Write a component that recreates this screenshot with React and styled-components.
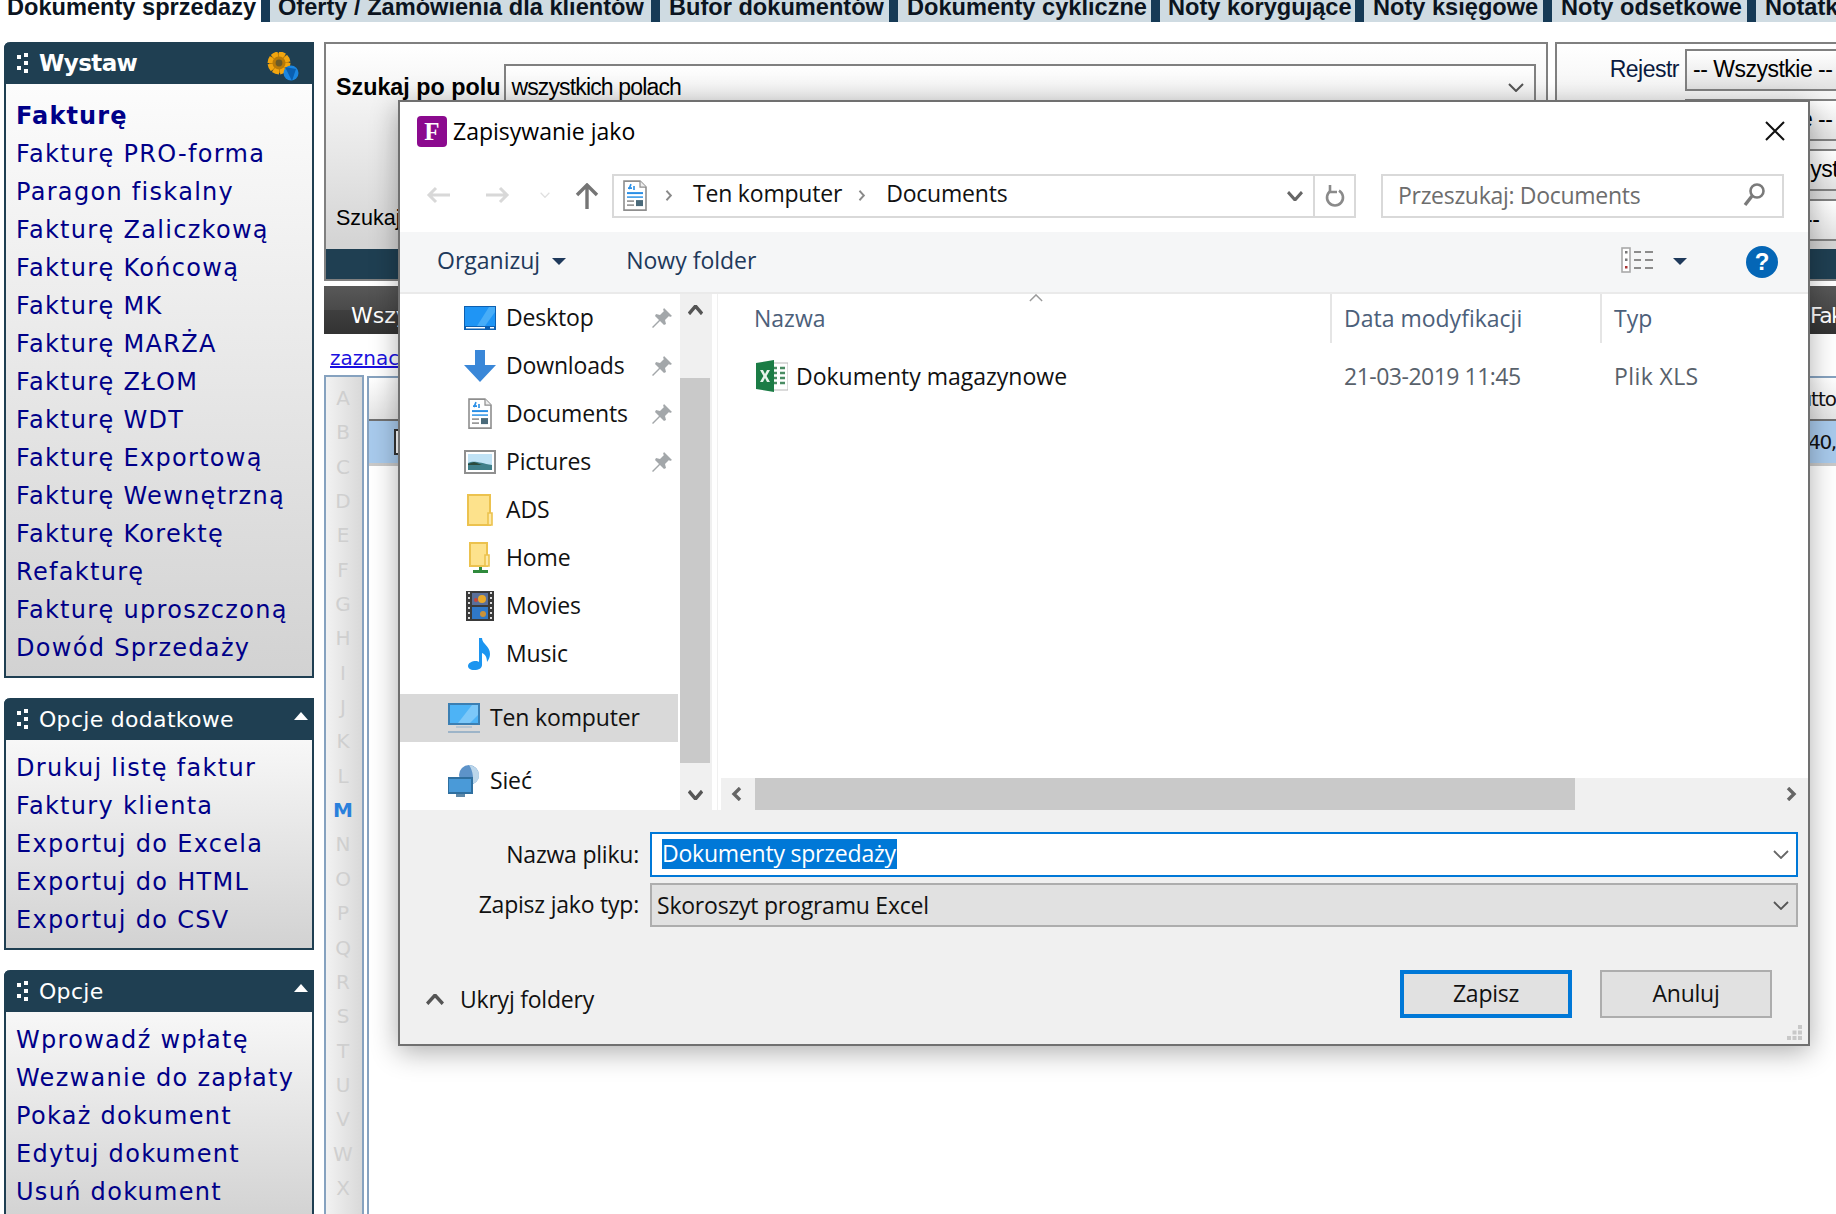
import React from "react";
import styled, { createGlobalStyle } from "styled-components";

const Global = createGlobalStyle`
  html, body { margin: 0; padding: 0; background: #fff; }
  * { box-sizing: border-box; }
  #root { width: 1836px; height: 1214px; overflow: hidden; position: relative; }
`;
const UI = `"Open Sans", "Noto Sans", sans-serif`;
const WEB = `"Liberation Sans", Arial, sans-serif`;
const VERD = `"DejaVu Sans", Verdana, sans-serif`;
const NAVY = "#1f3f52";

const Page = styled.div`
  width: 1836px; height: 1214px; position: relative; overflow: hidden; background: #fff; font-family: ${WEB};
`;
const TabBar = styled.div`
  display: flex; height: 22px; overflow: hidden; background: #cfdbe2;
`;
const Tab = styled.div`
  flex: ${(p) => (p.$last ? 1 : "none")}; width: ${(p) => (p.$w ? `${p.$w}px` : "auto")}; height: 22px; padding-left: ${(p) => p.$pl}px; line-height: 14px;
  font-size: 23.6px; font-weight: bold; color: #0b1420; white-space: nowrap; overflow: hidden;
  background: ${(p) => (p.$active ? "#fff" : "#cfdbe2")};
  border-right: ${(p) => (p.$last ? 0 : "9px")} solid #163a56;
`;
const Body = styled.div`
  display: grid; grid-template-columns: 310px 1fr; column-gap: 10px; padding: 20px 0 0 4px;
`;
const Sidebar = styled.div`
  display: flex; flex-direction: column; gap: 20px;
`;
const Panel = styled.section`
  width: 310px; border: 2px solid ${NAVY}; border-top: 0; border-radius: 6px 6px 0 0;
  background: linear-gradient(#fff, #d2d2d2);
`;
const PanelHead = styled.div`
  height: 42px; margin: 0 -2px; padding: 0 6px 0 12px; background: ${NAVY}; border-radius: 6px 0 0 0;
  display: flex; align-items: center; gap: 9px; color: #fff; font-family: ${VERD};
  font-size: ${(p) => (p.$bold ? 23 : 22)}px; font-weight: ${(p) => (p.$bold ? "bold" : "normal")};
  letter-spacing: ${(p) => (p.$bold ? -0.6 : 0.3)}px; position: relative;
`;
const HeadEnd = styled.span`
  margin-left: auto; display: flex; align-self: flex-start; margin-top: ${(p) => p.$mt}px; margin-right: ${(p) => p.$mr}px;
`;
const Caret = styled.span`
  width: 0; height: 0; border-left: 7px solid transparent; border-right: 7px solid transparent;
  border-bottom: 8px solid #fff;
`;
const MenuList = styled.div`
  padding: ${(p) => p.$pt}px 0 9px 10px;
`;
const MenuLink = styled.div`
  height: 38px; line-height: 38px; font-family: ${VERD}; font-size: 24px; color: #000088; white-space: nowrap;
  font-weight: ${(p) => (p.$bold ? "bold" : "normal")};
  letter-spacing: ${(p) => (p.$bold ? 1.1 : 1.3)}px;
`;
const Main = styled.div`
  display: flex; flex-direction: column; min-width: 0;
`;
const TopRow = styled.div`
  display: flex; gap: 7px; height: 239px;
`;
const Box = styled.div`
  flex: none; width: ${(p) => p.$w}px; border: 2px solid #808080; display: flex; flex-direction: column;
  background: linear-gradient(#fff, #d4d4d4 85%);
  ${(p) => p.$open && "border-right: 0;"}
`;
const BoxContent = styled.div`
  flex: 1; padding: ${(p) => p.$pad}; min-height: 0; overflow: hidden;
`;
const DarkBar = styled.div`
  height: 30px; background: ${NAVY}; flex: none;
`;
const SearchRow = styled.div`
  display: flex; align-items: flex-start; gap: 4px; height: 42px; color: #000;
`;
const SearchLabel = styled.span`
  font-weight: ${(p) => (p.$bold ? "bold" : "normal")}; font-size: ${(p) => (p.$bold ? 23.3 : 21.5)}px; line-height: 42px; white-space: nowrap;
  ${(p) => p.$bold && "margin-top: 2px;"}
`;
const SearchSelect = styled.div`
  width: 1032px; height: 44px; border: 2px solid #808080; background: linear-gradient(#fff, #ececec);
  display: flex; align-items: center; justify-content: space-between; padding: 2px 10px 0 5px;
  font-size: 23px; letter-spacing: -0.85px;
`;
const SecondSearch = styled(SearchRow)`
  margin-top: 91px;
`;
const FilterRow = styled.div`
  height: 50px; display: flex; align-items: flex-start; font-size: 23px; color: #000; letter-spacing: -0.5px;
`;
const FilterLabel = styled.span`
  width: 128px; text-align: right; padding-right: 6px; line-height: 40px; white-space: nowrap; color: #0a1a40;
`;
const FilterSelect = styled.span`
  flex: 1; height: 42px; border: 2px solid #808080; border-right: 0;
  background: linear-gradient(#fff, #e2e2e2); padding-left: ${(p) => p.$indent}px; line-height: 36px; white-space: nowrap; overflow: hidden;
`;
const DarkTabs = styled.div`
  margin-top: 5px; height: 48px; display: flex; justify-content: space-between; align-items: flex-end;
  padding: 0 0 2px 27px; color: #fff; font-family: ${VERD}; font-size: 22px; line-height: 32px;
  background: linear-gradient(#585858, #4a4a4a 50%, #3f3f3f 50%, #333);
`;
const DarkTabEnd = styled.span`
  width: 26px; overflow: hidden; white-space: nowrap; letter-spacing: -1.5px;
`;
const SelectAll = styled.a`
  display: block; margin: 12px 0 0 6px; height: 29px; font-family: ${VERD}; font-size: 20px; line-height: 24px; color: #1a10e0; text-decoration: underline;
`;
const TableArea = styled.div`
  display: flex; gap: 3px; height: 840px;
`;
const Alpha = styled.div`
  width: 40px; flex: none; border: 2px solid #86a2bf; border-bottom: 0; padding-top: 4px;
  background: linear-gradient(90deg, #f2f2f2, #d9d9d9);
  display: flex; flex-direction: column; align-items: center;
`;
const AlphaLetter = styled.span`
  height: 34.35px; line-height: 34px; font-family: ${VERD}; font-size: 20px; padding-right: 2px;
  color: ${(p) => (p.$on ? "#2a80dc" : "#cfcfcf")}; font-weight: ${(p) => (p.$on ? "bold" : "normal")};
`;
const Table = styled.div`
  flex: 1; border-left: 2px solid #86a2bf; border-top: 2px solid #86a2bf; margin-top: 1px; min-width: 0;
`;
const THead = styled.div`
  height: 43px; background: linear-gradient(#fff, #e4e4e4); border-bottom: 2px solid #707070; font-family: ${VERD}; font-size: 20px;
  display: flex; justify-content: flex-end; align-items: center; color: #111; white-space: nowrap; overflow: hidden; letter-spacing: -1px;
`;
const TRow = styled.div`
  height: 45px; background: #a8caec; border-bottom: 3px solid #c9c9c9; display: flex; align-items: center; justify-content: space-between;
  font-family: ${VERD}; font-size: 20px; color: #111; white-space: nowrap; overflow: hidden; padding-left: 25px; letter-spacing: -1.5px;
`;
const RowCheck = styled.span`
  width: 24px; height: 26px; border: 2px solid #333; background: #fff; flex: none;
`;
const Clip = styled.span`
  margin-right: ${(p) => p.$mr}px;
`;

/* dialog */
const Dialog = styled.div`
  position: absolute; left: 398px; top: 100px; width: 1412px; height: 946px; border: 2px solid #707070;
  background: #fff; box-shadow: 0 6px 26px rgba(0,0,0,.32); font-family: ${UI}; font-size: 23px; color: #000;
  display: flex; flex-direction: column;
`;
const TitleBar = styled.div`
  height: 62px; flex: none; display: flex; align-items: center; padding: 0 22px 4px 17px; gap: 6px;
`;
const AppBadge = styled.span`
  width: 30px; height: 31px; border-radius: 4px; background: #8b0a8e; color: #fff; display: flex; align-items: center; justify-content: center;
  font-family: "Liberation Serif", serif; font-weight: bold; font-size: 25px; line-height: 1;
`;
const CloseBtn = styled.span`
  margin-left: auto; display: flex;
`;
const NavBar = styled.div`
  height: 68px; flex: none; display: flex; align-items: flex-start; padding: 10px 25px 0 26px;
`;
const NavGlyph = styled.span`
  display: flex; flex: none; margin: ${(p) => p.$m ?? "0"};
`;
const AddressBox = styled.div`
  width: 744px; height: 44px; margin-left: 13px; flex: none; border: 2px solid #d9d9d9; display: flex; align-items: center; padding-left: 9px; color: #111;
`;
const Crumb = styled.span`
  margin: 0 16px 6px 20px; white-space: nowrap; letter-spacing: -0.2px;
`;
const AddressEnd = styled.span`
  margin-left: auto; display: flex; align-items: center; height: 100%;
`;
const RefreshCell = styled.span`
  width: 41px; height: 100%; border-left: 2px solid #d9d9d9; margin-left: 10px; display: flex; align-items: center; justify-content: center;
`;
const SearchField = styled.div`
  width: 403px; height: 44px; margin-left: 25px; border: 2px solid #d9d9d9; display: flex; align-items: center; justify-content: space-between;
  padding: 0 16px 2px 15px; color: #6d6d6d; flex: none; white-space: nowrap; letter-spacing: -0.3px;
`;
const Toolbar = styled.div`
  height: 62px; flex: none; background: #f5f6f7; border-bottom: 2px solid #eaeaea; display: flex; align-items: center; padding: 0 30px 4px 37px; color: #1e395b;
`;
const ToolItem = styled.span`
  display: flex; align-items: center; white-space: nowrap; margin: ${(p) => p.$m ?? "0"};
`;
const DownCaret = styled.span`
  width: 0; height: 0; border-left: 7px solid transparent; border-right: 7px solid transparent; border-top: 7px solid #1e395b; margin-top: 3px;
  margin-left: ${(p) => p.$ml}px;
`;
const HelpDot = styled.span`
  width: 32px; height: 32px; border-radius: 50%; background: #0466b6; color: #fff; display: flex; align-items: center; justify-content: center;
  font-family: ${WEB}; font-weight: bold; font-size: 24px; margin: 2px 0 -2px 59px;
`;
const Content = styled.div`
  flex: 1; display: flex; min-height: 0;
`;
const NavPane = styled.div`
  width: 280px; flex: none; display: flex; flex-direction: column; overflow: hidden;
`;
const NavRow = styled.div`
  height: 48px; flex: none; display: flex; align-items: center; gap: 10px; padding: 0 5px 2px ${(p) => p.$pl}px; color: #111; letter-spacing: -0.15px;
  margin-top: ${(p) => p.$mt ?? 0}px; background: ${(p) => (p.$sel ? "#d9d9d9" : "transparent")}; width: 278px; white-space: nowrap;
`;
const NavIcon = styled.span`
  width: 32px; height: 32px; display: flex; align-items: center; justify-content: center; flex: none; margin-top: 2px;
`;
const PinWrap = styled.span`
  margin-left: auto; display: flex; margin-top: 2px;
`;
const VScroll = styled.div`
  width: 32px; flex: none; background: #f0f0f0; display: flex; flex-direction: column; align-items: flex-start;
`;
const ScrollBtn = styled.span`
  width: 30px; height: 84px; flex: none; display: flex; align-items: ${(p) => (p.$end ? "flex-end" : "flex-start")}; justify-content: center;
  padding: ${(p) => (p.$end ? "0 0 10px" : "11px 0 0")};
`;
const VThumb = styled.span`
  width: 30px; height: 385px; background: #c9c9c9; flex: none;
`;
const VScrollEnd = styled(ScrollBtn)`
  height: 47px;
`;
const ListPane = styled.div`
  flex: 1; margin-left: 5px; border-left: 1px solid #f0f0f0; display: flex; flex-direction: column; position: relative; min-width: 0;
`;
const Grid = styled.div`
  display: grid; grid-template-columns: 612px 270px 1fr;
`;
const HeadRow = styled(Grid)`
  height: 49px; color: #4c607a;
`;
const HeadCell = styled.div`
  padding: 2px 0 0 ${(p) => p.$pl ?? 12}px; line-height: 45px; ${(p) => !p.$first && "border-left: 2px solid #e5e5e5;"}
  position: relative; white-space: nowrap;
`;
const SortMark = styled.span`
  position: absolute; left: 311px; top: 0; display: flex;
`;
const FileRow = styled(Grid)`
  margin-top: 10px; height: 45px; align-items: center; color: #58616b;
`;
const FileName = styled.div`
  display: flex; align-items: center; gap: 8px; padding-left: 38px; color: #111; white-space: nowrap;
`;
const FileCell = styled.div`
  padding-left: 14px; white-space: nowrap; letter-spacing: ${(p) => p.$ls}px;
`;
const HScroll = styled.div`
  margin: auto 0 0 3px; height: 32px; background: #f0f0f0; display: flex; align-items: stretch;
`;
const HBtn = styled.span`
  width: ${(p) => p.$w}px; flex: ${(p) => (p.$grow ? 1 : "none")}; display: flex; align-items: center; justify-content: ${(p) => (p.$grow ? "flex-end" : "flex-start")};
  padding: 0 ${(p) => (p.$grow ? 11 : 0)}px 0 ${(p) => (p.$grow ? 0 : 10)}px;
`;
const HThumb = styled.span`
  width: 820px; background: #c9c9c9; flex: none;
`;
const Bottom = styled.div`
  height: 234px; flex: none; background: #f0f0f0; padding: 22px 10px 0 0; position: relative; display: flex; flex-direction: column; letter-spacing: -0.22px;
`;
const FormRow = styled.div`
  display: grid; grid-template-columns: 239px 1148px; column-gap: 11px; align-items: center; margin-bottom: ${(p) => p.$mb ?? 0}px;
`;
const FormLabel = styled.label`
  text-align: right; white-space: nowrap; color: #111; padding-bottom: 2px;
`;
const Field = styled.div`
  height: ${(p) => p.$h}px; display: flex; align-items: center; justify-content: space-between; white-space: nowrap; color: #111;
  border: 2px solid ${(p) => (p.$focus ? "#0078d7" : "#adadad")}; background: ${(p) => (p.$focus ? "#fff" : "#e1e1e1")};
  padding: 0 7px 0 ${(p) => (p.$focus ? 10 : 5)}px;
`;
const Selected = styled.span`
  background: #0078d7; color: #fff; height: 30px; line-height: 28px; padding-right: 1px; margin-top: -1px;
`;
const Footer = styled.div`
  display: flex; align-items: center; margin-top: 43px; padding: 0 26px;
`;
const Toggle = styled.span`
  display: flex; align-items: center; gap: 16px; color: #111; margin: 10px auto 0 0; white-space: nowrap;
`;
const Btn = styled.span`
  width: 172px; height: 48px; display: flex; align-items: center; justify-content: center; background: #e1e1e1; color: #111; flex: none;
  border: ${(p) => (p.$primary ? "4px solid #0078d7" : "2px solid #adadad")}; margin-left: ${(p) => p.$ml ?? 0}px; padding-bottom: 2px;
`;
const Grip = styled.span`
  position: absolute; right: 5px; bottom: 3px; display: flex;
`;

const Chevron = ({ w = 16, h = 9, c = "#666", s = 2, up }) => (
  <svg width={w} height={h} viewBox="0 0 16 9" preserveAspectRatio="none">
    <polyline points={up ? "1,8 8,1 15,8" : "1,1 8,8 15,1"} fill="none" stroke={c} strokeWidth={s} />
  </svg>
);
const Side = ({ left, c = "#666", s = 3.4, w = 11, h = 14 }) => (
  <svg width={w} height={h} viewBox="0 0 11 14" preserveAspectRatio="none">
    <polyline points={left ? "9,1 3,7 9,13" : "2,1 8,7 2,13"} fill="none" stroke={c} strokeWidth={s} />
  </svg>
);
const Arrow = ({ dir }) => (
  <svg width="24" height="18" viewBox="0 0 24 18" fill="none" stroke="#d8d8d8" strokeWidth="3">
    {dir === "l" ? <path d="M24 9H3M10 2 3 9l7 7" /> : <path d="M0 9h21M14 2l7 7-7 7" />}
  </svg>
);
const UpArrow = () => (
  <svg width="24" height="26" viewBox="0 0 24 26" fill="none" stroke="#757575" strokeWidth="3.4">
    <path d="M12 26V3M2 12l10-10 10 10" />
  </svg>
);
const CloseX = () => (
  <svg width="22" height="22" viewBox="0 0 22 22" stroke="#111" strokeWidth="2"><path d="M2 2l18 18M20 2 2 20" /></svg>
);
const Refresh = () => (
  <svg width="20" height="24" viewBox="0 0 20 24" fill="none" stroke="#8a8a8a" strokeWidth="2.6">
    <path d="M6 6.6A8 8 0 1 0 14 6.6" /><path d="M5 1v7h7" />
  </svg>
);
const Magnifier = () => (
  <svg width="24" height="26" viewBox="0 0 24 26" fill="none" stroke="#7a7a7a" strokeWidth="2.6">
    <circle cx="15" cy="9" r="6.5" /><path d="M10 14 3 23" strokeWidth="3.4" />
  </svg>
);
const ViewIcon = () => (
  <svg width="32" height="26" viewBox="0 0 32 26">
    <rect x="1" y="1" width="8" height="24" fill="#fff" stroke="#a9a9a9" strokeWidth="1.6" />
    <rect x="4" y="4" width="2.5" height="2.5" fill="#777" /><rect x="4" y="11.5" width="2.5" height="2.5" fill="#777" /><rect x="4" y="19" width="2.5" height="2.5" fill="#a33" />
    <path d="M13 5h7M24 5h8M13 13h7M24 13h8M13 21h7M24 21h8" stroke="#8c8c8c" strokeWidth="2" />
  </svg>
);
const Pin = () => (
  <svg width="22" height="22" viewBox="0 0 22 22">
    <path d="M13 1l8 8-2 1-1-1-4 4 1 4-2 1-4-4-7 7-1-1 7-7-4-4 1-2 4 1 4-4-1-1z" fill="#a3a7aa" />
  </svg>
);
const DocIcon = ({ size = 24 }) => (
  <svg width={size} height={size * 1.3} viewBox="0 0 24 31">
    <path d="M1 1h16l6 6v23H1z" fill="#fff" stroke="#8e8e8e" strokeWidth="1.6" />
    <path d="M17 1v6h6" fill="#eee" stroke="#8e8e8e" strokeWidth="1.2" />
    <path d="M5 8h4M11 6v4M8 4 6 9" stroke="#2a8fe6" strokeWidth="1.6" />
    <path d="M4 13h16" stroke="#2a8fe6" strokeWidth="2" /><path d="M4 17h16" stroke="#3a9ae8" strokeWidth="1.6" />
    <path d="M4 21h7M4 25h7" stroke="#9a9a9a" strokeWidth="1.6" /><rect x="13" y="20" width="7" height="6" fill="#4a6a7a" />
  </svg>
);
const Icons = {
  desktop: (
    <svg width="32" height="24" viewBox="0 0 32 24"><rect width="32" height="24" fill="#0d5fb0" /><rect x="1" y="1" width="30" height="19" fill="#1f95f5" /><path d="M13 20 25 1h6v5L21 20z" fill="#47adf8" /><rect x="2" y="21" width="19" height="1.5" fill="#fff" /><rect x="26" y="21" width="4" height="1.5" fill="#fff" /></svg>
  ),
  downloads: (
    <svg width="32" height="32" viewBox="0 0 32 32"><path d="M11 0h10v15h11L16 32 0 15h11z" fill="#3a87d8" /></svg>
  ),
  documents: <DocIcon />,
  pictures: (
    <svg width="32" height="24" viewBox="0 0 32 24"><rect x="1" y="1" width="30" height="22" fill="#fff" stroke="#8f8f8f" strokeWidth="2" /><rect x="4" y="4" width="24" height="16" fill="#bfe2f5" /><path d="M4 13c6-3 12 0 24 2v5H4z" fill="#3f7f8a" /><path d="M4 14l6-2 8 3H4z" fill="#2b4a3c" /></svg>
  ),
  folder: (
    <svg width="26" height="32" viewBox="0 0 26 32"><path d="M1 1h22v30H1z" fill="#fde28c" stroke="#ecc24e" strokeWidth="2" /><path d="M21 19h4v12h-4z" fill="#fde9a8" stroke="#ecc24e" strokeWidth="1.6" /></svg>
  ),
  home: (
    <svg width="22" height="32" viewBox="0 0 22 32"><path d="M1 1h17v23H1z" fill="#fde28c" stroke="#ecc24e" strokeWidth="2" /><path d="M16 13h4v11h-4z" fill="#fde9a8" stroke="#ecc24e" strokeWidth="1.6" /><path d="M10 25h3v3h6v3H4v-3h6z" fill="#2f8a3c" /></svg>
  ),
  movies: (
    <svg width="28" height="30" viewBox="0 0 28 30"><rect width="28" height="30" fill="#3a3a3a" /><path d="M2 2h2M2 7h2M2 12h2M2 17h2M2 22h2M2 27h2M24 2h2M24 7h2M24 12h2M24 17h2M24 22h2M24 27h2" stroke="#ddd" strokeWidth="2" /><rect x="6" y="2" width="16" height="12" fill="#5a6f9a" /><circle cx="16" cy="8" r="4" fill="#e8a92b" /><circle cx="10" cy="9" r="2" fill="#c4463a" /><rect x="6" y="16" width="16" height="12" fill="#2f78c8" /><circle cx="17" cy="23" r="3" fill="#c9923a" /></svg>
  ),
  music: (
    <svg width="24" height="32" viewBox="0 0 24 32"><path d="M11 0h3c0 6 8 8 8 16 0 3-1 5-3 8 0-5-2-8-5-9v12c0 3-3 5-8 5-4 0-6-2-6-4 0-3 4-5 8-5 1 0 2 0 3 1z" fill="#1c95f0" /></svg>
  ),
  computer: (
    <svg width="32" height="30" viewBox="0 0 32 30"><rect x="1" y="1" width="30" height="20" fill="#4db3f6" stroke="#3b7fb3" strokeWidth="2" /><path d="M10 20 24 2h6v10l-8 8z" fill="#7cc8f9" /><rect x="8" y="23" width="16" height="2" fill="#b8c6d2" /><rect y="28" width="32" height="2" fill="#9db4c8" /></svg>
  ),
  network: (
    <svg width="32" height="32" viewBox="0 0 32 32"><circle cx="21" cy="10" r="10" fill="#5d93c9" /><path d="M21 0c6 1 10 5 10 10s-3 8-7 9c2-5 1-13-3-19z" fill="#bcd6ea" /><rect x="0" y="13" width="24" height="15" fill="#4a9ad8" stroke="#2f6f9f" strokeWidth="2" /><rect x="8" y="29" width="9" height="3" fill="#5e88a8" /></svg>
  ),
  excel: (
    <svg width="32" height="32" viewBox="0 0 32 32"><rect x="12" y="3" width="20" height="27" fill="#fff" stroke="#b8b8b8" /><path d="M16 8h5M24 8h5M16 13h5M24 13h5M16 18h5M24 18h5M16 23h5M24 23h5" stroke="#4a8c63" strokeWidth="2.4" /><path d="M0 3 18 0v32L0 29z" fill="#1b7c45" /><path d="M4 10h3l2 4 2-4h3l-3.4 6L14 22h-3l-2-4-2 4H4l3.4-6z" fill="#e6f3ea" /></svg>
  ),
};
const Grab = () => (
  <svg width="14" height="20" viewBox="0 0 14 20" fill="#fff"><rect x="1" y="2" width="4" height="4" /><rect x="8" y="0" width="4" height="4" /><rect x="8" y="8" width="4" height="4" /><rect x="1" y="13" width="4" height="4" /><rect x="8" y="16" width="4" height="4" /></svg>
);
const GearBadge = () => (
  <svg width="32" height="30" viewBox="0 0 32 30">
    <circle cx="12" cy="11" r="10" fill="#b87a08" />
    <circle cx="12" cy="11" r="9" fill="none" stroke="#f2a50f" strokeWidth="5" strokeDasharray="6 1" />
    <circle cx="12" cy="11" r="3.4" fill="#6b5a28" />
    <circle cx="24" cy="21" r="7.5" fill="#1b86e0" /><path d="M18 15l11 2-4 12z" fill="#0a5fb0" />
  </svg>
);
const GripDots = () => (
  <svg width="16" height="16" viewBox="0 0 16 16" fill="#c8c8c8"><rect x="11" y="0" width="4" height="4" /><rect x="5.5" y="5.5" width="4" height="4" /><rect x="11" y="5.5" width="4" height="4" /><rect x="0" y="11" width="4" height="4" /><rect x="5.5" y="11" width="4" height="4" /><rect x="11" y="11" width="4" height="4" /></svg>
);

const issue = ["Fakturę PRO-forma", "Paragon fiskalny", "Fakturę Zaliczkową", "Fakturę Końcową", "Fakturę MK", "Fakturę MARŻA", "Fakturę ZŁOM", "Fakturę WDT", "Fakturę Exportową", "Fakturę Wewnętrzną", "Fakturę Korektę", "Refakturę", "Fakturę uproszczoną", "Dowód Sprzedaży"];
const extra = ["Drukuj listę faktur", "Faktury klienta", "Exportuj do Excela", "Exportuj do HTML", "Exportuj do CSV"];
const options = ["Wprowadź wpłatę", "Wezwanie do zapłaty", "Pokaż dokument", "Edytuj dokument", "Usuń dokument"];
const letters = "ABCDEFGHIJKLMNOPQRSTUVWX".split("");
const places = [
  ["Desktop", "desktop", true], ["Downloads", "downloads", true], ["Documents", "documents", true], ["Pictures", "pictures", true],
  ["ADS", "folder"], ["Home", "home"], ["Movies", "movies"], ["Music", "music"],
];

export default function App() {
  return (
    <Page>
      <Global />
      <TabBar>
        <Tab $active $w={270} $pl={7}>Dokumenty sprzedaży</Tab>
        <Tab $w={390} $pl={8}>Oferty / Zamówienia dla klientów</Tab>
        <Tab $w={238} $pl={9}>Bufor dokumentów</Tab>
        <Tab $w={262} $pl={9}>Dokumenty cykliczne</Tab>
        <Tab $w={204} $pl={8}>Noty korygujące</Tab>
        <Tab $w={188} $pl={9}>Noty księgowe</Tab>
        <Tab $w={204} $pl={9}>Noty odsetkowe</Tab>
        <Tab $pl={9} $last>Notatki</Tab>
      </TabBar>
      <Body>
        <Sidebar>
          <Panel>
            <PanelHead $bold><Grab />Wystaw<HeadEnd $mt={10} $mr={9}><GearBadge /></HeadEnd></PanelHead>
            <MenuList $pt={13}>
              <MenuLink $bold>Fakturę</MenuLink>
              {issue.map((t) => <MenuLink key={t}>{t}</MenuLink>)}
            </MenuList>
          </Panel>
          <Panel>
            <PanelHead><Grab />Opcje dodatkowe<HeadEnd $mt={14} $mr={0}><Caret /></HeadEnd></PanelHead>
            <MenuList $pt={9}>{extra.map((t) => <MenuLink key={t}>{t}</MenuLink>)}</MenuList>
          </Panel>
          <Panel>
            <PanelHead><Grab />Opcje<HeadEnd $mt={14} $mr={0}><Caret /></HeadEnd></PanelHead>
            <MenuList $pt={9}>{options.map((t) => <MenuLink key={t}>{t}</MenuLink>)}</MenuList>
          </Panel>
        </Sidebar>
        <Main>
          <TopRow>
            <Box $w={1224}>
              <BoxContent $pad="20px 0 0 10px">
                <SearchRow>
                  <SearchLabel $bold>Szukaj po polu</SearchLabel>
                  <SearchSelect>wszystkich polach<Chevron c="#555" w={16} h={9} /></SearchSelect>
                </SearchRow>
                <SecondSearch><SearchLabel>Szukaj</SearchLabel></SecondSearch>
              </BoxContent>
              <DarkBar />
            </Box>
            <Box $w={285} $open>
              <BoxContent $pad="5px 0 0 0">
                <FilterRow><FilterLabel>Rejestr</FilterLabel><FilterSelect $indent={6}>-- Wszystkie --</FilterSelect></FilterRow>
                <FilterRow><FilterLabel /><FilterSelect $indent={6}>-- Wszystkie --</FilterSelect></FilterRow>
                <FilterRow><FilterLabel /><FilterSelect $indent={80}>Wszystkie</FilterSelect></FilterRow>
                <FilterRow><FilterLabel /><FilterSelect $indent={118}>--</FilterSelect></FilterRow>
              </BoxContent>
              <DarkBar />
            </Box>
          </TopRow>
          <DarkTabs><span>Wszystkie</span><DarkTabEnd>Faktury</DarkTabEnd></DarkTabs>
          <SelectAll>zaznacz</SelectAll>
          <TableArea>
            <Alpha>{letters.map((l) => <AlphaLetter key={l} $on={l === "M"}>{l}</AlphaLetter>)}</Alpha>
            <Table>
              <THead><Clip $mr={0}>Brutto</Clip></THead>
              <TRow><RowCheck /><Clip $mr={-22}>140,00</Clip></TRow>
            </Table>
          </TableArea>
        </Main>
      </Body>

      <Dialog>
        <TitleBar>
          <AppBadge>F</AppBadge>Zapisywanie jako
          <CloseBtn><CloseX /></CloseBtn>
        </TitleBar>
        <NavBar>
          <NavGlyph $m="12px 0 0 0"><Arrow dir="l" /></NavGlyph>
          <NavGlyph $m="12px 0 0 36px"><Arrow dir="r" /></NavGlyph>
          <NavGlyph $m="18px 0 0 30px"><Chevron w={10} h={6} c="#e0e0e0" /></NavGlyph>
          <NavGlyph $m="9px 0 0 25px"><UpArrow /></NavGlyph>
          <AddressBox>
            <DocIcon size={24} />
            <NavGlyph $m="0 0 2px 18px"><Side w={8} h={11} c="#8a8a8a" s={2.6} /></NavGlyph>
            <Crumb>Ten komputer</Crumb>
            <NavGlyph $m="0 0 2px 0"><Side w={8} h={11} c="#8a8a8a" s={2.6} /></NavGlyph>
            <Crumb>Documents</Crumb>
            <AddressEnd>
              <Chevron w={16} h={10} c="#666" s={3} />
              <RefreshCell><Refresh /></RefreshCell>
            </AddressEnd>
          </AddressBox>
          <SearchField>Przeszukaj: Documents<Magnifier /></SearchField>
        </NavBar>
        <Toolbar>
          <ToolItem>Organizuj<DownCaret $ml={12} /></ToolItem>
          <ToolItem $m="0 0 0 60px">Nowy folder</ToolItem>
          <ToolItem $m="0 0 0 auto"><ViewIcon /><DownCaret $ml={20} /></ToolItem>
          <HelpDot>?</HelpDot>
        </Toolbar>
        <Content>
          <NavPane>
            {places.map(([t, ic, pin]) => (
              <NavRow key={t} $pl={64}>
                <NavIcon>{Icons[ic]}</NavIcon>{t}
                {pin && <PinWrap><Pin /></PinWrap>}
              </NavRow>
            ))}
            <NavRow $pl={48} $mt={16} $sel><NavIcon>{Icons.computer}</NavIcon>Ten komputer</NavRow>
            <NavRow $pl={48} $mt={15}><NavIcon>{Icons.network}</NavIcon>Sieć</NavRow>
          </NavPane>
          <VScroll>
            <ScrollBtn><Chevron w={15} h={10} c="#555" s={3.4} up /></ScrollBtn>
            <VThumb />
            <VScrollEnd $end><Chevron w={15} h={10} c="#555" s={3.4} /></VScrollEnd>
          </VScroll>
          <ListPane>
            <HeadRow>
              <HeadCell $first $pl={36}>Nazwa<SortMark><Chevron w={14} h={8} c="#9a9a9a" s={1.6} up /></SortMark></HeadCell>
              <HeadCell>Data modyfikacji</HeadCell>
              <HeadCell>Typ</HeadCell>
            </HeadRow>
            <FileRow>
              <FileName>{Icons.excel}Dokumenty magazynowe</FileName>
              <FileCell $ls={-0.5}>21-03-2019 11:45</FileCell>
              <FileCell $ls={0.4}>Plik XLS</FileCell>
            </FileRow>
            <HScroll>
              <HBtn $w={34}><Side left /></HBtn>
              <HThumb />
              <HBtn $grow><Side /></HBtn>
            </HScroll>
          </ListPane>
        </Content>
        <Bottom>
          <FormRow $mb={6}>
            <FormLabel>Nazwa pliku:</FormLabel>
            <Field $focus $h={45}><Selected>Dokumenty sprzedaży</Selected><Chevron c="#666" s={1.8} /></Field>
          </FormRow>
          <FormRow>
            <FormLabel>Zapisz jako typ:</FormLabel>
            <Field $h={44}>Skoroszyt programu Excel<Chevron c="#555" s={1.8} /></Field>
          </FormRow>
          <Footer>
            <Toggle><Chevron w={18} h={11} c="#555" s={3} up />Ukryj foldery</Toggle>
            <Btn $primary>Zapisz</Btn>
            <Btn $ml={28}>Anuluj</Btn>
          </Footer>
          <Grip><GripDots /></Grip>
        </Bottom>
      </Dialog>
    </Page>
  );
}
